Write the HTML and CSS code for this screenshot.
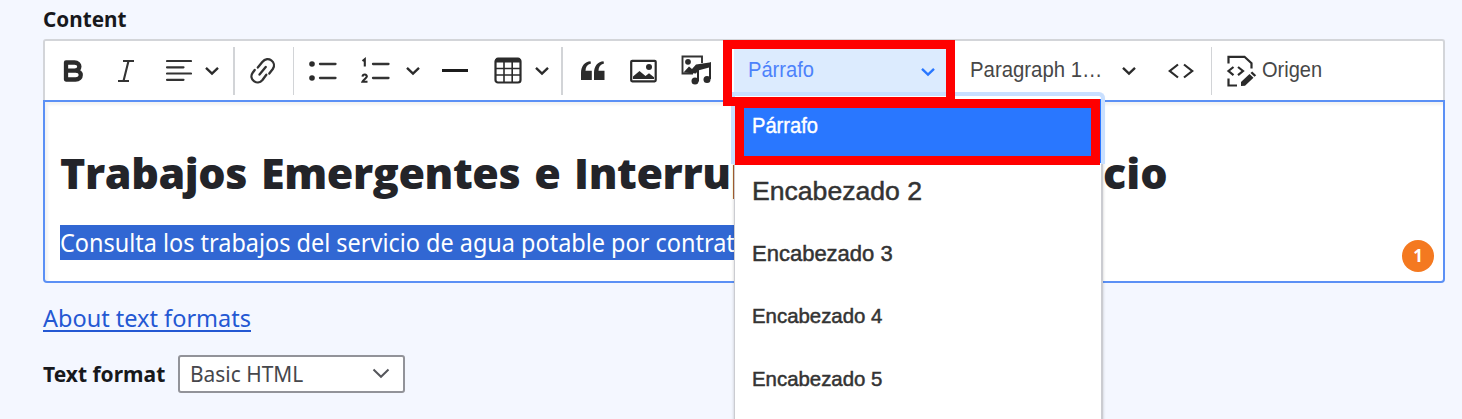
FILE: index.html
```html
<!DOCTYPE html>
<html lang="es">
<head>
<meta charset="utf-8">
<title>Content</title>
<link rel="stylesheet" href="styles.css">
</head>
<body>
<main class="form">
  <div class="label content-label"><span class="t-content">Content</span></div>
  <section class="editor">
    <div class="toolbar">
      <svg class="icon bold" width="20" height="22" viewBox="0 0 20 22"><path d="M3 2.500h8.500c6.500 0 6.500 8.200 0 8.200H3h9.500c7 0 7 8.800 0 8.800H3z" fill="none" stroke="#2b2b2b" stroke-width="4.300" stroke-linejoin="round"/></svg>
      <svg class="icon italic" width="18" height="24" viewBox="0 0 18 24"><path d="M6 2h11M1 22h11M11.500 2l-5 20" fill="none" stroke="#333" stroke-width="2.100"/></svg>
      <svg class="icon align" width="26" height="24" viewBox="0 0 26 24"><path d="M1 2h24M1 8.300h16.500M1 14.500h24M1 20.800h16.500" stroke="#333" stroke-width="2.200" stroke-linecap="round"/></svg>
      <svg class="icon chev c1" width="16" height="10" viewBox="0 0 16 10"><path d="M2 1.800l6 5.700 6-5.700"/></svg>
      <i class="sep s1"></i>
      <svg class="icon link" width="26" height="28" viewBox="0 0 26 28"><g fill="none" stroke="#333" stroke-width="2.300" stroke-linecap="round"><path d="M7.800 10.500l4.500-5.500c5.500-7 15 .500 10.500 7l-3.500 4.500"/><path d="M4.700 13l-2 2.700c-4.500 6.500 4.500 13.500 9.800 7.300l3.800-5.200M9.500 17.500l6.200-7.500"/></g></svg>
      <i class="sep s2"></i>
      <svg class="icon bullets" width="28" height="20" viewBox="0 0 28 20"><g fill="#2b2b2b"><circle cx="3" cy="3" r="2.800"/><circle cx="3" cy="17" r="2.800"/></g><path d="M11 3h15.500M11 17h15.500" stroke="#333" stroke-width="2.300" stroke-linecap="round"/></svg>
      <svg class="icon numbers" width="29" height="28" viewBox="0 0 29 28"><path d="M1.500 4l2.300-1.800v7.300M1.500 19.700c.3-3 4.700-2.700 4.300 0-.2 1.500-3.500 3-4.300 5h5" fill="none" stroke="#2b2b2b" stroke-width="2.100"/><path d="M12 7h15.500M12 21h15.500" stroke="#333" stroke-width="2.300" stroke-linecap="round"/></svg>
      <svg class="icon chev c2" width="16" height="10" viewBox="0 0 16 10"><path d="M2 1.800l6 5.700 6-5.700"/></svg>
      <i class="rule"></i>
      <svg class="icon table" width="28" height="27" viewBox="0 0 28 27"><rect x="1.500" y="2" width="25" height="23.500" rx="2.500" fill="#fff" stroke="#2b2b2b" stroke-width="2.200"/><path d="M1 5.500q0-5 3-5h20q3 0 3 5z" fill="#2b2b2b"/><path d="M1.500 11.500h25M1.500 18h25M10 5v20.500M18.200 5v20.500" stroke="#2b2b2b" stroke-width="1.600"/></svg>
      <svg class="icon chev c3" width="16" height="10" viewBox="0 0 16 10"><path d="M2 1.800l6 5.700 6-5.700"/></svg>
      <i class="sep s3"></i>
      <svg class="icon quote" width="24" height="20" viewBox="0 0 24 20"><path d="M0 19V12C0 5 4 .5 9.500 .3l.5 2.200C6.300 3.500 4.500 6 4.500 9.700h6.300V19zM13 19V12C13 5 17 .5 22.500 .3l.5 2.200c-3.700 1-5.500 3.500-5.500 7.200h6V19z" fill="#2b2b2b"/></svg>
      <svg class="icon image" width="27" height="24" viewBox="0 0 27 24"><rect x="1.200" y="1.800" width="24.500" height="20.500" rx="1" fill="#fff" stroke="#2b2b2b" stroke-width="2.200"/><circle cx="19" cy="8" r="3" fill="#2b2b2b"/><path d="M3 20v-2.500l6.500-5.500 6 5 3.500-2.700 5 4V20z" fill="#2b2b2b"/></svg>
      <svg class="icon media" width="31" height="30" viewBox="0 0 31 30"><path d="M21 8V1.500H1.500v17H12" fill="none" stroke="#333" stroke-width="1.900"/><circle cx="7" cy="6.800" r="2.900" fill="#2b2b2b"/><path d="M2.500 17.500l5.500-6 3 2.500 4-4.500L28.500 7.500l1.500-.500v5l-13 3.500-2 3z" fill="#2b2b2b"/><path d="M17 11v15.500M29 8v16" stroke="#2b2b2b" stroke-width="2"/><circle cx="14" cy="26" r="3.500" fill="#2b2b2b"/><circle cx="26" cy="24.500" r="3.500" fill="#2b2b2b"/></svg>
      <div class="heading-select"><span class="t-select">Párrafo</span><svg class="chev blue" width="16" height="10" viewBox="0 0 16 10"><path d="M2 1.800l6 5.700 6-5.700"/></svg></div>
      <span class="tool-text para"><span class="t-para">Paragraph 1…</span></span>
      <svg class="icon chev c4" width="16" height="10" viewBox="0 0 16 10"><path d="M2 1.800l6 5.700 6-5.700"/></svg>
      <svg class="icon code" width="26" height="16" viewBox="0 0 26 16"><path d="M10 1.500L1.800 8l8.200 6.500M16 1.500L24.200 8 16 14.500" fill="none" stroke="#2b2b2b" stroke-width="2.200"/></svg>
      <i class="sep s4"></i>
      <svg class="icon source" width="31" height="32" viewBox="0 0 31 32"><g fill="none" stroke="#2b2b2b" stroke-width="2.200"><path d="M2.500 8.500V1.800h16l7 6.500v5.200M2.500 23.500v7H11M7.500 12L2.500 16l5 4.200M12 12l5 4-5 4.200"/></g><path d="M15 31v-4l8.500-8 4 3.700-8.500 8zM24.500 18l1.700-1.500 4 3.700-1.700 1.500z" fill="#2b2b2b"/></svg>
      <span class="tool-text origin"><span class="t-origin">Origen</span></span>
    </div>
    <div class="canvas">
      <h1><span class="title-start"><span class="t-title">Trabajos Emergentes e Interrup</span></span><span class="title-end">cio</span></h1>
      <p><span class="t-body">Consulta los trabajos del servicio de agua potable por contrat</span></p>
      <span class="badge">1</span>
    </div>
    <div class="menu">
      <div class="option selected"><span class="t-selected">Párrafo</span></div>
      <div class="option h2"><span>Encabezado 2</span></div>
      <div class="option h3"><span>Encabezado 3</span></div>
      <div class="option h4"><span>Encabezado 4</span></div>
      <div class="option h4"><span>Encabezado 5</span></div>
    </div>
    <div class="ring"></div>
    <div class="mark mark-select"></div>
    <div class="mark mark-option"></div>
  </section>
  <a class="about"><span class="t-about">About text formats</span></a>
  <div class="format">
    <span class="label"><span class="t-format">Text format</span></span>
    <div class="select"><span class="t-basic">Basic HTML</span><svg width="18" height="11" viewBox="0 0 18 11"><path d="M1.500 1.500L9 8.800l7.500-7.300" fill="none" stroke="#55565b" stroke-width="2"/></svg></div>
  </div>
</main>
</body>
</html>
```
FILE: styles.css
```css
* { box-sizing: border-box; }
html { overflow: hidden; }
body { margin: 0; height: 419px; overflow: hidden; background: #f4f7ff; font-family: "Noto Sans", "Open Sans", sans-serif; color: #232429; }
.form { height: 419px; padding: 0 17px 0 43px; overflow: hidden; }
.form span { white-space: nowrap; }
.label { font-weight: 700; font-size: 21px; line-height: 30px; color: #17181c; }
.content-label { height: 39px; padding-top: 4px; }
.t-content { display: inline-block; transform: scaleX(.985); transform-origin: 0 50%; }
.editor { position: relative; height: 244px; }
.toolbar { display: flex; align-items: center; height: 61px; background: #fff; border: 2px solid #d3d5d9; border-bottom: 0; border-radius: 3px 3px 0 0; }
.toolbar > * { flex: none; }
.icon { display: block; }
.chev { fill: none; stroke: #2b2b2b; stroke-width: 2.400; }
.sep { width: 1.500px; height: 48px; background: #d2d4d7; }
.bold { margin-left: 18px; }
.italic { margin-left: 34px; }
.align { margin-left: 31px; }
.c1 { margin-left: 12px; }
.s1 { margin-left: 13px; }
.link { margin-left: 15px; }
.s2 { margin-left: 17px; }
.bullets { margin-left: 15px; }
.numbers { margin-left: 24px; }
.c2 { margin-left: 14.500px; }
.rule { margin-left: 21.500px; width: 26px; height: 3px; background: #1c1c1c; }
.table { margin-left: 26px; }
.c3 { margin-left: 12px; }
.s3 { margin-left: 11px; }
.quote { margin-left: 18px; }
.image { margin-left: 25px; }
.media { margin-left: 24px; margin-bottom: 2px; }
.heading-select { display: flex; align-items: center; justify-content: space-between; align-self: flex-start; width: 212px; height: 51px; margin: 8px 0 0 22px; padding: 0 10px 9px 14px; background: #dcebfe; font: 22px/30px "Liberation Sans", Arial, sans-serif; color: #4d82fb; }
.heading-select .chev { stroke: #2977ff; margin-top: 3px; }
.tool-text { padding-bottom: 2px; font: 22px/30px "Liberation Sans", Arial, sans-serif; color: #474747; }
.t-select, .t-selected { display: inline-block; transform: scaleX(.915); transform-origin: 0 50%; }
.t-para { display: inline-block; transform: scaleX(.925); transform-origin: 0 50%; }
.t-origin { display: inline-block; transform: scaleX(.91); transform-origin: 0 50%; }
.para { width: 132px; margin-left: 24px; }
.c4 { margin-left: 19px; }
.code { margin-left: 31px; }
.s4 { margin-left: 17px; }
.source { margin-left: 14px; }
.origin { margin-left: 5px; }
.canvas { position: relative; height: 183px; padding: 42px 14px 0 15px; background: #fff; border: 2px solid #5b90f5; border-radius: 0 0 4px 4px; box-shadow: inset 3px 3px 3px #f3f3f3; }
.canvas h1 { display: flex; margin: 0; height: 58px; font-family: "Open Sans", "Noto Sans", sans-serif; font-size: 43px; line-height: 58px; font-weight: 800; }
.title-start { flex: none; width: 700px; letter-spacing: -.4px; word-spacing: 3px; }
.title-end { margin-left: 343px; }
.canvas p { width: 690px; margin: 23px 0 0; height: 35px; background: #3167d3; color: #fff; font-size: 25px; line-height: 35px; }
.t-body { display: inline-block; transform: scaleX(.938); transform-origin: 0 50%; }
.badge { position: absolute; right: 9px; bottom: 9px; width: 32px; height: 32px; border-radius: 50%; background: #f47920; color: #fff; font: 700 17px/32px "Noto Sans", sans-serif; text-align: center; }
.menu { position: absolute; left: 691px; top: 56px; width: 369px; height: 330px; padding-top: 4px; background: #fff; border: 2px solid #cbccd1; border-width: 0 2px 0 1px; box-shadow: 0 2px 3px #0003; font-family: "Liberation Sans", Arial, sans-serif; color: #333; -webkit-text-stroke: .5px currentColor; }
.option { height: 62.700px; padding: 0 0 6px 17px; display: flex; align-items: center; font-size: 22px; }
.selected { height: 64px; padding-bottom: 10px; background: #2977ff; color: #fff; -webkit-text-stroke-width: .4px; }
.h2 { font-size: 26.600px; }
.h4 { font-size: 20.400px; }
.ring { position: absolute; left: 688px; top: 53px; width: 374px; height: 72px; border: 4px solid #c8dfff; border-bottom: 0; border-radius: 0 6px 0 0; }
.mark { position: absolute; border: 9px solid #f00; }
.mark-select { left: 680px; top: 1px; width: 232px; height: 66px; }
.mark-option { left: 692px; top: 60px; width: 365px; height: 66px; }
.about { display: table; margin-top: 18px; font-size: 23.500px; line-height: 35px; color: #2458d3; text-decoration: underline; text-decoration-thickness: 2px; text-underline-offset: 3px; }
.format { display: flex; align-items: center; height: 38px; margin-top: 19px; }
.format .label { width: 135px; }
.select { display: flex; align-items: center; justify-content: space-between; width: 227px; height: 38px; padding: 0 13px 2px 10px; background: #fff; border: 2px solid #929399; border-radius: 3px; font-size: 22px; color: #46474c; }
.t-basic { display: inline-block; transform: scaleX(.95); transform-origin: 0 50%; }
```
